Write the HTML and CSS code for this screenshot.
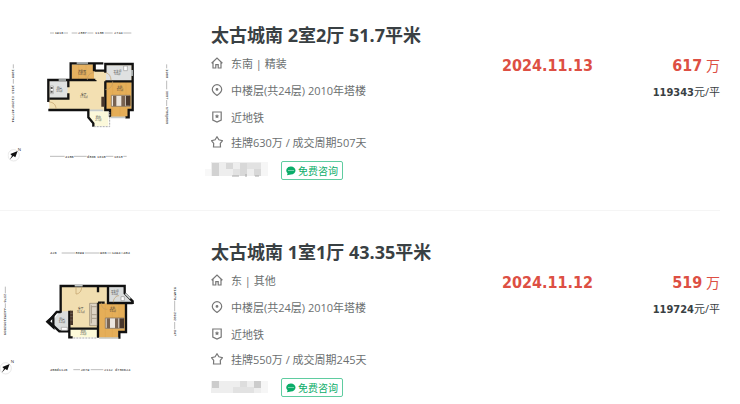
FILE: index.html
```html
<!DOCTYPE html>
<html lang="zh">
<head>
    <meta charset="utf-8">
    <title>成交房源</title>
    <link rel="stylesheet" href="styles.css">
</head>
<body>
    <!-- shared icons -->
    <svg class="sprite" aria-hidden="true">
        <symbol id="house" viewBox="0 0 12 12"><path d="M.6 6.200 6 1l5.400 5.200M2 5.200V11h2.800V7.600h2.400V11H10V5.200"/></symbol>
        <symbol id="pin" viewBox="0 0 12 12"><path d="M6 .7a4.700 4.700 0 0 1 4.700 4.700C10.700 8 8 10 6 11.400 4 10 1.300 8 1.300 5.400A4.700 4.700 0 0 1 6 .7z"/><circle cx="6" cy="5.400" r=".8"/></symbol>
        <symbol id="shield" viewBox="0 0 12 12"><path d="M1.800 1h8.400v8L6 11 1.800 9z"/><path d="m6 3 .7 1.400 1.500.2-1.100 1.100.3 1.500L6 6.500l-1.400.7.3-1.500-1.100-1.100 1.500-.2z" fill="#777" stroke="none"/></symbol>
        <symbol id="star" viewBox="0 0 12 12"><path d="m6 .8 1.900 3 3.500.9-2.100 2.700.2 3.600H2.500l.2-3.600L.6 4.700l3.500-.9z"/></symbol>
        <symbol id="chat" viewBox="0 0 10 10"><path d="M5 .5a4.500 4 0 1 1 0 8L1 9.300l.6-2A4.500 4 0 0 1 5 .5z" fill="#0bad69"/><g fill="#fff"><circle cx="3" cy="4.500" r=".6"/><circle cx="5" cy="4.500" r=".6"/><circle cx="7" cy="4.500" r=".6"/></g></symbol>
        <symbol id="compass" viewBox="0 0 50 50">
            <circle cx="18" cy="26" r="17" fill="none" stroke="#ddd" stroke-width="2"/>
            <path d="m30 13-7 19-6-4-11 11 7-12-5-5z" fill="#111"/>
        </symbol>
    </svg>

    <main class="list">
        <article class="item">
            <svg class="plan" viewBox="0 0 570 450">
                <g class="ruler">
                    <path d="M150 39h12M192 39h12M215 39h17M262 39h18M314 39h24M370 39h24M150 409h44M222 409h38M318 409h22M370 409h10"/>
                    <path d="M40 133v12M40 177v14M500 133v12M500 182v26M500 240v18"/>
                    <text x="164" y="43">1916</text><text x="234" y="43">2307</text><text x="285" y="43">1130</text><text x="342" y="43">2744</text>
                    <text x="195" y="413">4156</text><text x="261" y="413">d386</text><text x="291" y="413">1810</text><text x="342" y="413">1813</text>
                    <text transform="translate(37 148) rotate(90)">1968</text><text transform="translate(37 195) rotate(90)">1813</text><text transform="translate(37 228) rotate(90)">c1200r4877H4</text>
                    <text transform="translate(497 148) rotate(90)">1968</text><text transform="translate(497 212) rotate(90)">3857</text><text transform="translate(497 260) rotate(90)">a755p505</text>
                </g>
                <path d="M212 131h70v22h34v-20h82v138h-12v22h-58v-20h-56l-4-1H148v-91h64z" fill="#f3e0b2"/>
                <path d="M216 134h66v46h-66z" fill="#e5b160"/>
                <path d="M318 136h76v46h-76zM149 182h54v53h-54z" fill="#dfe1e1"/>
                <path d="M317 184h77v84h-10v23h-53v-23h-14z" fill="#e5ae58"/>
                <path d="M268 274h57v44h-44l-13-24z" fill="#fbf8da"/>
                <path d="M236 134v46M258 134v46M338 186v103M360 186v103M378 186v80" stroke="#d59e48"/>
                <g class="wall">
                    <path d="M145 246v-66h67v-50h72v22M212 180h74M284 152h32v-20h82v138h-12v22h-10M145 270h120v22l15 18v10M316 184h82M316 132v26M316 184v86h14v21M286 180v4M205 182v20M205 220v16h-56M282 130v24M286 130h24"/>
                </g>
                <path d="M230 129h34M176 180h22M396 150v18M332 292h44M270 271h40" stroke="#c5cbcb" stroke-width="5"/>
                <path d="M281 320h48v-44" fill="none" stroke="#aaa" stroke-width="3" stroke-dasharray="6 3"/>
                <path d="M146 246c14 0 22 8 22 21M262 180c0-14 8-22 20-22M338 184c0 14-8 25-22 25M318 158c10 3 15 12 15 23" fill="none" stroke="#c09d66" stroke-width="2"/>
                <path d="M334 226h56v33h-56z" fill="#ebe5dd" stroke="#776655" stroke-width="2"/>
                <path d="M339 227h10v32h-10zM364 227h12v32h-12z" fill="#796351"/>
                <path d="M378 227h13v30h-13zM304 230h10v30h-10z" fill="#49372b"/>
                <path d="M371 138h11v14h-11zM151 198h9v23h-9z" fill="#fff" stroke="#999" stroke-width="2"/>
                <path d="M152 201h6v6h-6zM152 212h6v6h-6z" fill="#555"/>
                <g class="room">
                    <text x="246" y="157">次卧室</text><text x="246" y="166">5.81㎡</text>
                    <text x="352" y="156">卫生间</text><text x="352" y="165">5.0㎡</text>
                    <text x="178" y="206">厨房</text><text x="178" y="215">3.5㎡</text>
                    <text x="251" y="224">客厅</text><text x="251" y="234">17.9㎡</text>
                    <text x="360" y="205">主卧</text><text x="360" y="214">9.7㎡</text>
                    <text x="295" y="295">阳台</text><text x="295" y="304">2.1㎡</text>
                </g>
                <use href="#compass" x="23" y="380" width="50" height="50"/>
                <text class="north" x="53" y="392">N</text>
            </svg>
            <div class="info">
                <h2 class="title">太古城南 2室2厅 51.7平米</h2>
                <ul class="meta">
                    <li><svg class="icon"><use href="#house"/></svg>东南 | 精装</li>
                    <li><svg class="icon"><use href="#pin"/></svg>中楼层(共24层) 2010年塔楼</li>
                    <li><svg class="icon"><use href="#shield"/></svg>近地铁</li>
                    <li class="deal"><svg class="icon"><use href="#star"/></svg>挂牌630万 / 成交周期507天</li>
                </ul>
                <div class="agent">
                    <svg class="name" viewBox="0 0 57 19">
                        <path d="M-6 8H0v7h-6z" fill="#f8f8f8"/><path d="M0 1h50v14H0z" fill="#eee"/><path d="M50 1h7v14h-7z" fill="#f6f6f6"/>
                        <path d="M1 2h7v13H1z" fill="#d2d2d2"/><path d="M15 2h7v6h-7zM29 2h7v13h-7zM43 8h7v7h-7z" fill="#d8d8d8"/><path d="M36 2h14v6H36zM22 8h7v7h-7z" fill="#e2e2e2"/>
                        <path d="M21 15h7M35 13v3M44 15h4" stroke="#aaa"/>
                    </svg>
                    <button class="consult"><svg class="chat"><use href="#chat"/></svg>免费咨询</button>
                </div>
            </div>
            <div class="date">2024.11.13</div>
            <div class="price">
                <div class="total"><b>617</b> 万</div>
                <div class="unit"><b>119343</b>元/平</div>
            </div>
        </article>

        <article class="item">
            <svg class="plan" viewBox="0 -9 570 450">
                <g class="ruler">
                    <path d="M185 39h40M255 39h44M322 39h12M362 39h8M220 389h20M272 389h38"/>
                    <path d="M16 140v20M16 190v14M524 182v32M524 246v22"/>
                    <text x="150" y="43">426</text><text x="226" y="43">3899</text><text x="300" y="43">986</text><text x="335" y="43">1494</text><text x="370" y="43">404</text>
                    <text x="150" y="393">456d1126</text><text x="242" y="393">2879</text><text x="312" y="393">2112</text><text x="345" y="393">d738624</text>
                    <text transform="translate(13 161) rotate(90)">2376</text><text transform="translate(13 205) rotate(90)">A43R3105260H</text>
                    <text transform="translate(521 141) rotate(90)">514R76</text><text transform="translate(521 216) rotate(90)">2992</text><text transform="translate(521 269) rotate(90)">847</text>
                </g>
                <path d="M182 139h142v50h-30v76h-84v-40h-28z" fill="#f1deb0"/>
                <path d="M326 143h44v18l24 24h-68zM180 214h28v60h-30l-22-28z" fill="#d9dcdc"/>
                <path d="M297 190h79v85h-20v20h-59z" fill="#e5ae58"/>
                <path d="M316 190v105M337 190v105M357 190v84" stroke="#d59e48"/>
                <path d="M210 268h84v24h-84z" fill="#fdfad9"/>
                <g class="wall">
                    <path d="M182 218v-80h192v22l24 24v8M182 216h-12l-24 28 32 30h30M208 212v80h10M210 266h84M294 139v18M324 139v50h74M294 188v105M378 188v88h-20v20M294 188h20"/>
                    <path d="m142 245 18-16v33z" fill="#111"/>
                </g>
                <path d="M224 137h24M297 294h58M376 161l15 15" stroke="#c5cbcb" stroke-width="5"/>
                <path d="M220 294h70" stroke="#aaa" stroke-width="3" stroke-dasharray="6 3"/>
                <path d="M228 140v22c9 0 17-8 17-22M304 188c0 14 6 20 18 20M340 187c0-11 8-20 17-20" fill="none" stroke="#c09d66" stroke-width="2"/>
                <path d="M210 212h9v43h-9z" fill="#49372b"/>
                <path d="M211 220h7M211 230h7M211 240h7" stroke="#aaa"/>
                <path d="M269 190h22v67h-22z" fill="#ddd3c4" stroke="#8b7d6a" stroke-width="2"/>
                <path d="M276 200h14M276 224h14M276 235h14M274 196v54" stroke="#8b7d6a" stroke-width="2"/>
                <path d="M316 234h56v31h-56z" fill="#ebe5dd" stroke="#776655" stroke-width="2"/>
                <path d="M320 235h10v30h-10zM345 235h10v30h-10z" fill="#796351"/><path d="M358 235h14v29h-14z" fill="#49372b"/>
                <path d="M363 170h10v12h-10zM184 262h18v9h-18z" fill="#fff" stroke="#999" stroke-width="2"/>
                <g class="room">
                    <text x="242" y="208">客厅</text><text x="242" y="218">16.5㎡</text>
                    <text x="344" y="157">卫生间</text><text x="344" y="166">3.0㎡</text>
                    <text x="186" y="240">厨房</text><text x="186" y="249">3.2㎡</text>
                    <text x="338" y="208">主卧</text><text x="338" y="217">9.6㎡</text>
                    <text x="250" y="276">阳台</text><text x="250" y="285">2.3㎡</text>
                </g>
                <use href="#compass" x="-1" y="359" width="50" height="50"/>
                <text class="north" x="32" y="370">N</text>
            </svg>
            <div class="info">
                <h2 class="title">太古城南 1室1厅 43.35平米</h2>
                <ul class="meta">
                    <li><svg class="icon"><use href="#house"/></svg>东 | 其他</li>
                    <li><svg class="icon"><use href="#pin"/></svg>中楼层(共24层) 2010年塔楼</li>
                    <li><svg class="icon"><use href="#shield"/></svg>近地铁</li>
                    <li class="deal"><svg class="icon"><use href="#star"/></svg>挂牌550万 / 成交周期245天</li>
                </ul>
                <div class="agent">
                    <svg class="name" viewBox="0 0 57 19">
                        <path d="M0 3h50v12H0z" fill="#eee"/><path d="M50 3h7v12h-7z" fill="#f6f6f6"/>
                        <path d="M1 3h7v7H1zM43 3h7v7h-7z" fill="#ccc"/><path d="M29 3h7v12h-7z" fill="#ddd"/><path d="M22 9h21v6H22z" fill="#e2e2e2"/>
                    </svg>
                    <button class="consult"><svg class="chat"><use href="#chat"/></svg>免费咨询</button>
                </div>
            </div>
            <div class="date">2024.11.12</div>
            <div class="price">
                <div class="total"><b>519</b> 万</div>
                <div class="unit"><b>119724</b>元/平</div>
            </div>
        </article>
    </main>
</body>
</html>
```
FILE: styles.css
```css
body {
    margin: 0;
    background: #fff;
    color: #6b6f70;
    font-family: "Open Sans", "Noto Sans CJK SC", sans-serif;
    font-size: 11px;
}
.sprite { position: absolute; width: 0; height: 0; }

.list { padding-right: 20px; }
.item {
    display: flex;
    align-items: flex-start;
    padding: 20px 0 30px;
    margin-bottom: 6px;
    border-bottom: 1px solid #f5f5f5;
}
.item:last-child { padding-bottom: 0; margin-bottom: 0; border-bottom: 0; }

/* floor plan */
.plan { width: 190px; height: 150px; flex: none; margin-right: 21px; }
.ruler { font-family: "Liberation Mono", monospace; font-size: 11px; fill: #222; }
.ruler path { stroke: #999; stroke-width: 2; fill: none; }
.wall path { stroke: #111; stroke-width: 7; fill: none; }
.room { font-size: 8px; fill: #333; text-anchor: middle; }
.north { font-size: 13px; fill: #333; }

.info { flex: 1; padding-top: 2px; }
.title {
    margin: 0 0 1px;
    font-size: 18px;
    line-height: 26px;
    color: #394043;
}
.meta { list-style: none; margin: 0; padding: 0; }
.meta li { display: flex; align-items: center; gap: 8px; height: 27px; }
.meta .deal { height: 24px; }
.icon { width: 12px; height: 12px; fill: none; stroke: #777; stroke-width: 1.2; }

.agent { display: flex; align-items: center; gap: 13px; margin-top: 7px; }
.name { width: 57px; height: 19px; overflow: visible; }
.consult {
    display: flex;
    align-items: center;
    gap: 2px;
    height: 19px;
    padding: 0 4px;
    border: 1px solid #5fcca0;
    border-radius: 2px;
    background: #fff;
    color: #0bad69;
    font-family: inherit;
    font-size: 10px;
}
.chat { width: 10px; height: 10px; }

/* date and price */
.date, .price b { font-family: "DejaVu Sans Condensed", "DejaVu Sans", sans-serif; font-weight: bold; }
.date, .total {
    padding-top: 33px;
    line-height: 26px;
    color: #dd4f43;
}
.date { font-size: 16px; }
.price { width: 127px; text-align: right; }
.total { font-size: 14px; }
.total b { font-size: 16px; }
.unit { line-height: 26px; color: #394043; }
```
